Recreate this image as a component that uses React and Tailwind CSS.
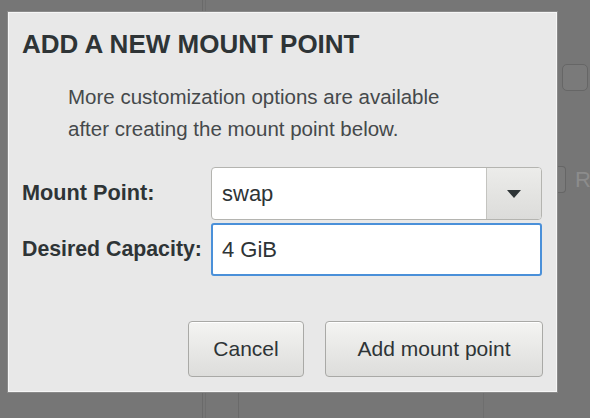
import React from "react";

const sans = { fontFamily: '"Liberation Sans", Arial, sans-serif' };

function Backdrop() {
  return (
    <>
      {/* bits of the window behind the dialog */}
      <div className="absolute left-[202px] top-0 h-full w-px bg-[#6a6a6a]" />
      <div className="absolute left-[205px] top-0 h-full w-px bg-[#6e6e6e]" />
      <div className="absolute left-[238px] top-[392px] h-[26px] w-px bg-[#6a6a6a]" />
      <div className="absolute left-[483px] top-[392px] h-[26px] w-px bg-[#6e6e6e]" />
      <div className="absolute left-[562px] top-[64px] h-[27px] w-[26px] rounded-[5px] border border-[#666] bg-[#7a7a7a]" />
      <div className="absolute left-[555px] top-[163px] flex items-center gap-[9px] text-[22px] text-[#8c8c8c]">
        <div className="h-[27px] w-[11px] rounded-r-[4px] border border-l-0 border-[#666] bg-[#7a7a7a]" />
        <span>R</span>
      </div>
    </>
  );
}

function Caret() {
  return (
    <svg width="14" height="8" viewBox="0 0 14 8">
      <path d="M0 0h14L7 8z" fill="#2e3436" />
    </svg>
  );
}

export default function App() {
  return (
    <div className="relative h-[418px] w-[590px] overflow-hidden bg-[#767676]" style={sans}>
      <Backdrop />
      <div className="relative pl-[8px] pt-[12px]">
        <div className="flex h-[380px] w-[549px] flex-col border border-[#f6f6f6] bg-[#e8e8e8] shadow-[0_0_0_1px_#8a8a8a]">
          <h1 className="pl-[13px] pt-[16px] text-[26px] font-bold leading-[30px] text-[#2e3436]">
            ADD A NEW MOUNT POINT
          </h1>
          <p className="pl-[59px] pt-[22px] text-[20.5px] leading-[32px] text-[#45494b]">
            More customization options are available
            <br />
            after creating the mount point below.
          </p>
          <div className="grid grid-cols-[189px_331px] gap-y-[3px] pl-[13px] pt-[22px]">
            <label className="flex items-center text-[21.7px] font-bold text-[#2e3436]">Mount Point:</label>
            <div className="flex h-[53px] overflow-hidden rounded-[4px] border border-[#b4b4b0] bg-white">
              <div className="flex flex-1 items-center pl-[10px] text-[22px] text-[#2e3436]">swap</div>
              <div className="flex w-[55px] items-center justify-center border-l border-[#c4c4c0] bg-gradient-to-b from-[#ececea] to-[#dcdcda]">
                <Caret />
              </div>
            </div>
            <label className="flex items-center text-[21.3px] font-bold text-[#2e3436]">Desired Capacity:</label>
            <div className="flex h-[53px] items-center rounded-[3px] border-2 border-[#4a90d9] bg-white pl-[9px] text-[22px] text-[#2e3436]">
              4 GiB
            </div>
          </div>
          <div className="flex justify-end gap-[21px] pr-[13px] pt-[45px]">
            <button className="h-[56px] w-[116px] rounded-[4px] border border-[#a9a9a6] bg-gradient-to-b from-[#f4f4f2] to-[#dddddb] text-[21px] text-[#2e3436] shadow-[inset_0_1px_0_#fff]">
              Cancel
            </button>
            <button className="h-[56px] w-[218px] rounded-[4px] border border-[#a9a9a6] bg-gradient-to-b from-[#f4f4f2] to-[#dddddb] text-[21px] text-[#2e3436] shadow-[inset_0_1px_0_#fff]">
              Add mount point
            </button>
          </div>
        </div>
      </div>
    </div>
  );
}
